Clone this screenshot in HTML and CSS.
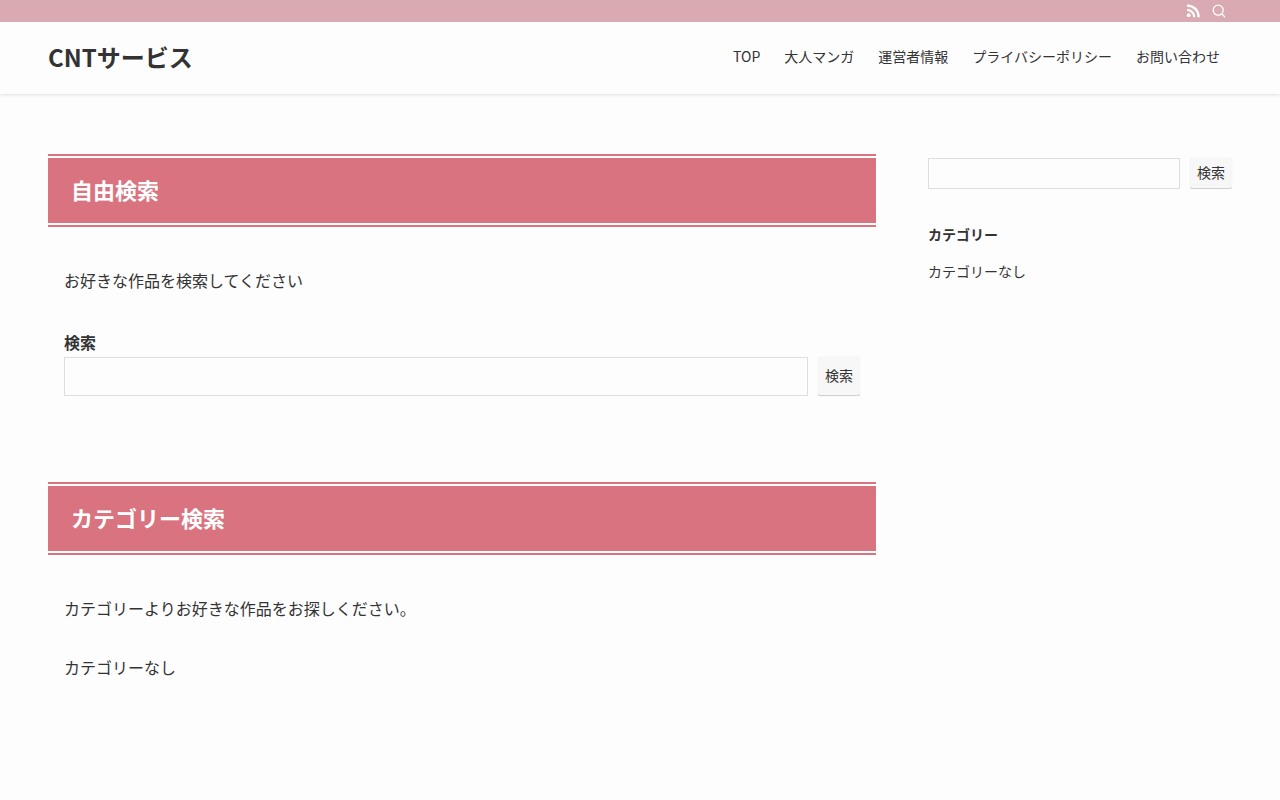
FILE: index.html
```html
<!DOCTYPE html>
<html lang="ja">
<head>
    <meta charset="UTF-8">
    <meta name="viewport" content="width=device-width, initial-scale=1.0">
    <title>CNTサービス</title>
    <link rel="stylesheet" href="styles.css">
</head>
<body>
    <div class="header-bar">
        <div class="inner bar-inner">
            <a class="icon-link" href="#" aria-label="RSS">
                <svg width="14" height="14" viewBox="0 0 14 14" fill="none" stroke="#fff" stroke-width="2.3">
                    <circle cx="2.7" cy="11.2" r="1.9" fill="#fff" stroke="none"/>
                    <path d="M1 5.8a7.2 7.2 0 0 1 7.2 7.4"/>
                    <path d="M1 1.6a11 11 0 0 1 11.5 11.6"/>
                </svg>
            </a>
            <button class="icon-link" type="button" aria-label="検索を開く">
                <svg width="14" height="14" viewBox="0 0 14 14" fill="none" stroke="#fff" stroke-width="1.3" stroke-linecap="round">
                    <circle cx="6.2" cy="6.2" r="5"/>
                    <path d="M9.9 9.9l2.8 2.8"/>
                </svg>
            </button>
        </div>
    </div>

    <header class="header">
        <div class="inner header-inner">
            <a class="site-title" href="#">CNTサービス</a>
            <nav class="gnav">
                <a href="#">TOP</a>
                <a href="#">大人マンガ</a>
                <a href="#">運営者情報</a>
                <a href="#">プライバシーポリシー</a>
                <a href="#">お問い合わせ</a>
            </nav>
        </div>
    </header>

    <div class="inner content">
        <main class="main">
            <section class="section">
                <h2 class="section-title">自由検索</h2>
                <div class="section-body">
                    <p>お好きな作品を検索してください</p>
                    <form class="search">
                        <label class="search-label" for="mainSearch">検索</label>
                        <div class="search-row">
                            <input class="search-input" id="mainSearch" type="search">
                            <button class="search-btn" type="button">検索</button>
                        </div>
                    </form>
                </div>
            </section>

            <section class="section">
                <h2 class="section-title">カテゴリー検索</h2>
                <div class="section-body">
                    <p>カテゴリーよりお好きな作品をお探しください。</p>
                    <p>カテゴリーなし</p>
                </div>
            </section>
        </main>

        <aside class="sidebar">
            <form class="search-row search-small">
                <input class="search-input" type="search" aria-label="検索">
                <button class="search-btn" type="button">検索</button>
            </form>
            <h3 class="widget-title">カテゴリー</h3>
            <p class="widget-text">カテゴリーなし</p>
        </aside>
    </div>
</body>
</html>
```
FILE: styles.css
```css
* {
    box-sizing: border-box;
}

body {
    margin: 0;
    background: #fdfdfd;
    color: #333;
    font-family: "Noto Sans CJK JP", sans-serif;
    font-size: 16px;
    line-height: 29px;
}

h2, h3, p, form {
    margin: 0;
}

a {
    color: inherit;
    text-decoration: none;
}

input, button {
    font-family: inherit;
    color: inherit;
}

.inner {
    max-width: 1296px;
    margin: 0 auto;
    padding: 0 48px;
}

/* 上部バー */
.header-bar {
    position: relative;
    background: #d9aab1;
}

.bar-inner {
    display: flex;
    justify-content: flex-end;
    height: 22px;
}

.icon-link {
    display: flex;
    align-items: center;
    padding: 0 6px;
    border: none;
    background: none;
    cursor: pointer;
}

/* ヘッダー */
.header {
    box-shadow: 0 1px 4px rgba(0, 0, 0, 0.12);
}

.header-inner {
    display: flex;
    align-items: center;
    justify-content: space-between;
    height: 72px;
    padding-bottom: 3px;
}

.site-title {
    font-size: 24px;
    font-weight: bold;
}

.gnav {
    display: flex;
}

.gnav a {
    padding: 0 12px;
    font-size: 14px;
}

/* コンテンツ */
.content {
    display: flex;
    gap: 52px;
    padding-top: 60px;
    padding-bottom: 60px;
}

.main {
    flex: 1;
}

.section + .section {
    margin-top: 86px;
}

/* 上下に二重線が入る見出し */
.section-title {
    padding: 17px 23px 19px;
    background: #d9737f;
    box-shadow: inset 0 2px #d9737f, inset 0 4px #fdfdfd, inset 0 -2px #d9737f, inset 0 -4px #fdfdfd;
    color: #fff;
    font-size: 22px;
    line-height: 37px;
}

.section-body {
    padding: 39px 16px 0;
}

.section-body p + p {
    margin-top: 30px;
}

/* 検索フォーム */
.search {
    margin-top: 33px;
}

.search-label {
    display: block;
    font-weight: bold;
}

.search-row {
    display: flex;
    gap: 10px;
    height: 39px;
}

.search-input {
    flex: 1;
    min-width: 0;
    padding: 0 8px;
    border: 1px solid #dedede;
    border-radius: 0;
    background: #fdfdfd;
    font-size: 16px;
    appearance: none;
}

.search-btn {
    width: 42px;
    padding: 0 0 4px;
    border: none;
    border-radius: 2px;
    background: #f7f7f7;
    box-shadow: 0 0 1px rgba(0, 0, 0, 0.15), inset 0 -1px #d0d0d0;
    font-size: 14px;
    cursor: pointer;
}

.search-small {
    height: 31px;
}

/* サイドバー */
.sidebar {
    width: 304px;
    padding-top: 4px;
    font-size: 14px;
    line-height: 25px;
}

.widget-title {
    margin: 33px 0 12px;
    font-size: 14px;
}
```
